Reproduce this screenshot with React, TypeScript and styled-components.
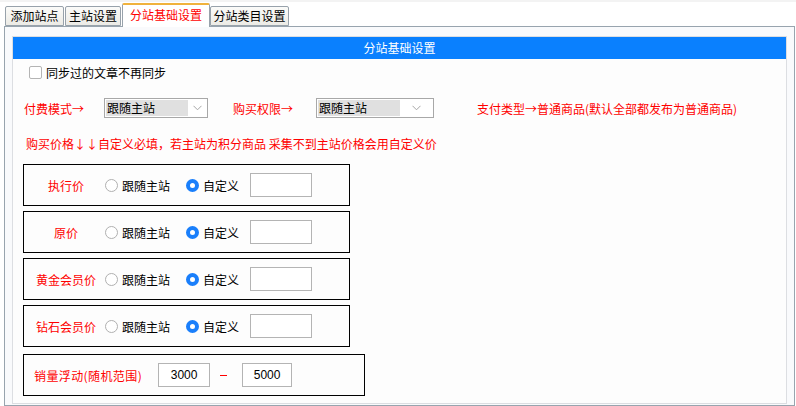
import React from 'react';
import styled, { createGlobalStyle } from 'styled-components';

const GlobalStyle = createGlobalStyle`
  html, body {
    margin: 0;
    padding: 0;
    background: #ffffff;
  }
  body {
    font-family: "Noto Sans CJK SC", "Microsoft YaHei", sans-serif;
    font-size: 12px;
    color: #000;
  }
`;

const Page = styled.div`
  width: 796px;
  height: 406px;
  overflow: hidden;
  padding: 2px 1px 0 4px;
  box-sizing: border-box;
  background: linear-gradient(#f3f3f3 0, #f3f3f3 2px, #ffffff 2px);
  display: flex;
  flex-direction: column;
`;

const TabBar = styled.div`
  display: flex;
  align-items: flex-end;
  height: 24px;
  padding-left: 1px;
  position: relative;
  z-index: 1;
`;

const Tab = styled.div<{ $active?: boolean; $width: number; $gap: number }>`
  box-sizing: border-box;
  width: ${({ $width }) => $width}px;
  height: ${({ $active }) => ($active ? '24px' : '20px')};
  margin-left: ${({ $gap }) => $gap}px;
  margin-bottom: ${({ $active }) => ($active ? '-1px' : '0')};
  border: 1px solid #98a2ab;
  border-top: ${({ $active }) => ($active ? '2px solid #f0b23c' : '1px solid #98a2ab')};
  border-bottom: ${({ $active }) => ($active ? 'none' : '1px solid #98a2ab')};
  border-radius: 2px 2px 0 0;
  background: ${({ $active }) =>
    $active ? '#ffffff' : 'linear-gradient(#fbfbf9, #ecebe6)'};
  color: ${({ $active }) => ($active ? '#ff0000' : '#000')};
  font-size: 12px;
  line-height: ${({ $active }) => ($active ? '20px' : '18px')};
  text-align: center;
  white-space: nowrap;
`;

const Panel = styled.div`
  flex: 1;
  border: 1px solid #98a4ae;
  background: #f9fafc;
  padding: 9px 7px 0 7px;
  box-sizing: border-box;
`;

const Frame = styled.div`
  border: 1px solid #dcdee2;
  background: #fdfdfd;
  height: 368px;
  box-sizing: border-box;
`;

const Header = styled.div`
  height: 22px;
  line-height: 22px;
  background: #0a80fe;
  color: #fff;
  text-align: center;
  font-size: 12px;
`;

const CheckRow = styled.label`
  display: flex;
  align-items: center;
  gap: 4px;
  height: 18px;
  margin-top: 4px;
  padding-left: 16px;
`;

const CheckBox = styled.span`
  width: 13px;
  height: 13px;
  border: 1px solid #b4b4b4;
  border-radius: 2px;
  background: #fff;
  box-sizing: border-box;
`;

const OptionRow = styled.div`
  display: flex;
  align-items: center;
  height: 20px;
  margin-top: 17px;
  padding-left: 11px;
`;

const RedText = styled.span<{ $width?: number }>`
  color: #ff0000;
  white-space: nowrap;
  ${({ $width }) => ($width ? `width: ${$width}px;` : '')}
`;

const Select = styled.div<{ $width: number; $after: number }>`
  display: flex;
  align-items: center;
  box-sizing: border-box;
  width: ${({ $width }) => $width}px;
  height: 20px;
  border: 1px solid #a8a8a8;
  background: #fff;
  padding: 1px;
  margin-right: ${({ $after }) => $after}px;
`;

const SelectValue = styled.span`
  flex: 0 0 81px;
  height: 16px;
  line-height: 16px;
  background: #e0e0e0;
  font-size: 12px;
  padding-left: 1px;
`;

const Chevron = styled.span`
  flex: 1;
  display: flex;
  justify-content: center;
`;

const Note = styled.div`
  color: #ff0000;
  margin-top: 17px;
  padding-left: 13px;
  line-height: 18px;
  white-space: nowrap;
`;

const BoxList = styled.div`
  display: flex;
  flex-direction: column;
  gap: 5px;
  margin-top: 11px;
  padding-left: 10px;
`;

const PriceBox = styled.div<{ $width: number; $gapTop?: number }>`
  box-sizing: border-box;
  width: ${({ $width }) => $width}px;
  height: 42px;
  border: 1px solid #000;
  display: flex;
  align-items: center;
  padding-left: 10px;
  margin-top: ${({ $gapTop }) => $gapTop ?? 0}px;
`;

const PriceLabel = styled.span`
  width: 64px;
  color: #ff0000;
  text-align: center;
  white-space: nowrap;
  margin-right: 7px;
`;

const Radio = styled.span<{ $checked?: boolean }>`
  box-sizing: border-box;
  width: 13px;
  height: 13px;
  border-radius: 50%;
  border: ${({ $checked }) => ($checked ? '4px solid #1a7ffb' : '1px solid #b0b0b0')};
  background: #fff;
  margin-right: 4px;
`;

const RadioText = styled.span<{ $after: number }>`
  margin-right: ${({ $after }) => $after}px;
  white-space: nowrap;
`;

const Input = styled.div<{ $width: number }>`
  box-sizing: border-box;
  width: ${({ $width }) => $width}px;
  height: 24px;
  border: 1px solid #b4b4b4;
  background: #fff;
  font-family: "Liberation Sans", Arial, sans-serif;
  font-size: 12px;
  line-height: 22px;
  text-align: center;
`;

const RangeLabel = styled(RedText)`
  margin-right: 16px;
  letter-spacing: 0.4px;
`;

const Dash = styled.span`
  width: 7px;
  height: 1px;
  background: #ff0000;
  margin: 0 15px 0 10px;
`;

const prices = ['执行价', '原价', '黄金会员价', '钻石会员价'];

const tabs = [
  { label: '添加站点', width: 59, gap: 0 },
  { label: '主站设置', width: 56, gap: 1 },
  { label: '分站基础设置', width: 88, gap: 1, active: true },
  { label: '分站类目设置', width: 79, gap: 0 },
];

const ChevronIcon = () => (
  <svg width="9" height="6" viewBox="0 0 9 6">
    <path d="M0.5 0.8 L4.5 4.8 L8.5 0.8" fill="none" stroke="#a6a6a6" strokeWidth="1" />
  </svg>
);

const App: React.FC = () => {
  return (
    <>
      <GlobalStyle />
      <Page>
        <TabBar>
          {tabs.map((t) => (
            <Tab key={t.label} $width={t.width} $gap={t.gap} $active={t.active}>
              {t.label}
            </Tab>
          ))}
        </TabBar>
        <Panel>
          <Frame>
            <Header>分站基础设置</Header>
            <CheckRow>
              <CheckBox />
              <span>同步过的文章不再同步</span>
            </CheckRow>

            <OptionRow>
              <RedText $width={80}>付费模式→</RedText>
              <Select $width={104} $after={25}>
                <SelectValue>跟随主站</SelectValue>
                <Chevron>
                  <ChevronIcon />
                </Chevron>
              </Select>
              <RedText $width={83}>购买权限→</RedText>
              <Select $width={118} $after={43}>
                <SelectValue>跟随主站</SelectValue>
                <Chevron>
                  <ChevronIcon />
                </Chevron>
              </Select>
              <RedText>支付类型→普通商品(默认全部都发布为普通商品)</RedText>
            </OptionRow>

            <Note>购买价格↓↓自定义必填，若主站为积分商品 采集不到主站价格会用自定义价</Note>

            <BoxList>
              {prices.map((label) => (
                <PriceBox key={label} $width={327}>
                  <PriceLabel>{label}</PriceLabel>
                  <Radio />
                  <RadioText $after={16}>跟随主站</RadioText>
                  <Radio $checked />
                  <RadioText $after={11}>自定义</RadioText>
                  <Input $width={62} />
                </PriceBox>
              ))}
              <PriceBox $width={342} $gapTop={2}>
                <RangeLabel>销量浮动(随机范围)</RangeLabel>
                <Input $width={52}>3000</Input>
                <Dash />
                <Input $width={50}>5000</Input>
              </PriceBox>
            </BoxList>
          </Frame>
        </Panel>
      </Page>
    </>
  );
};

export default App;
